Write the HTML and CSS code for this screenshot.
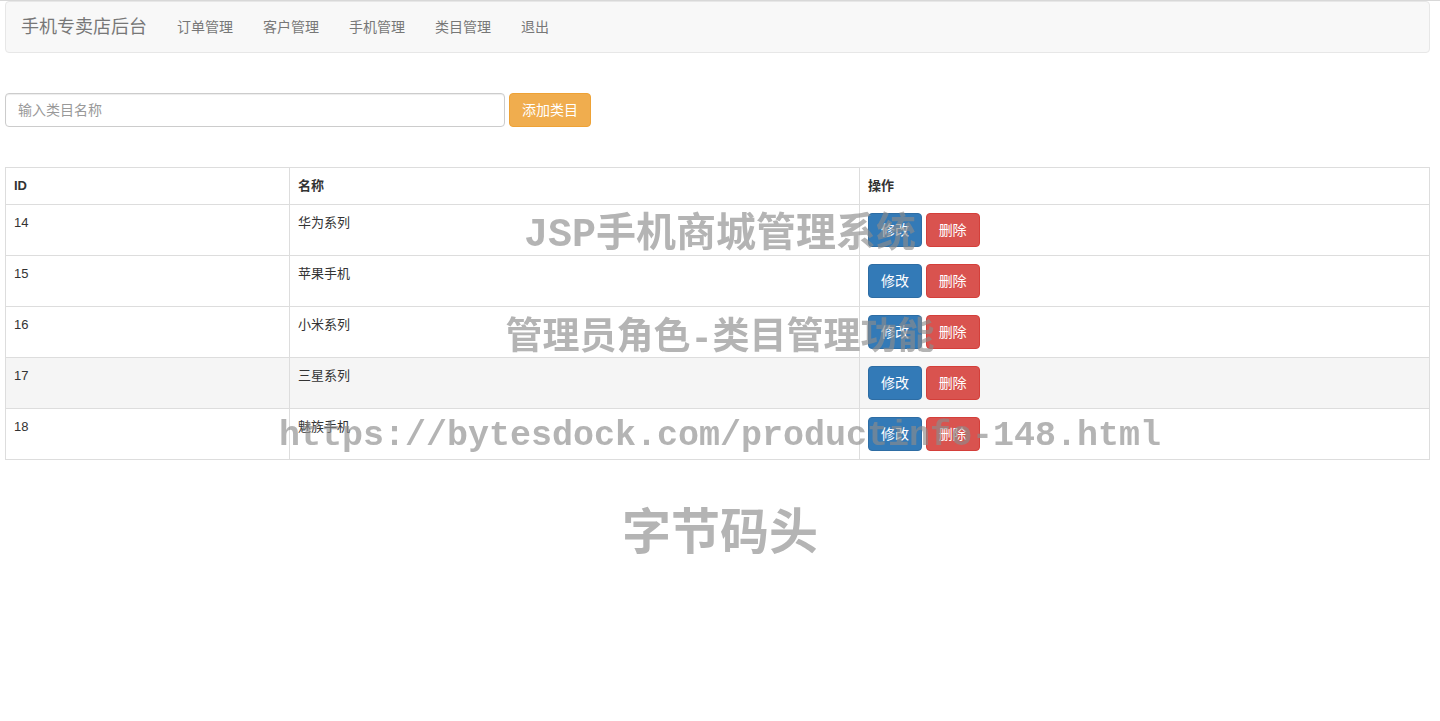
FILE: index.html
```html
<!DOCTYPE html>
<html lang="zh">
<head>
<meta charset="utf-8">
<title>类目管理</title>
<link rel="stylesheet" href="styles.css">
</head>
<body>
<div class="topline"></div>
<div class="page">
  <nav class="navbar">
    <a class="brand" href="#">手机专卖店后台</a>
    <ul class="nav">
      <li><a href="#">订单管理</a></li>
      <li><a href="#">客户管理</a></li>
      <li><a href="#">手机管理</a></li>
      <li><a href="#">类目管理</a></li>
      <li><a href="#">退出</a></li>
    </ul>
  </nav>

  <form class="add-form">
    <input class="form-control" type="text" placeholder="输入类目名称">
    <button type="button" class="btn btn-warning">添加类目</button>
  </form>

  <table class="table">
    <thead>
      <tr><th class="c-id">ID</th><th class="c-name">名称</th><th class="c-op">操作</th></tr>
    </thead>
    <tbody>
      <tr><td>14</td><td>华为系列</td><td><button class="btn btn-primary">修改</button> <button class="btn btn-danger">删除</button></td></tr>
      <tr><td>15</td><td>苹果手机</td><td><button class="btn btn-primary">修改</button> <button class="btn btn-danger">删除</button></td></tr>
      <tr><td>16</td><td>小米系列</td><td><button class="btn btn-primary">修改</button> <button class="btn btn-danger">删除</button></td></tr>
      <tr class="hover"><td>17</td><td>三星系列</td><td><button class="btn btn-primary">修改</button> <button class="btn btn-danger">删除</button></td></tr>
      <tr><td>18</td><td>魅族手机</td><td><button class="btn btn-primary">修改</button> <button class="btn btn-danger">删除</button></td></tr>
    </tbody>
  </table>
</div>

<div class="watermark">
  <div class="wm wm1">JSP手机商城管理系统</div>
  <div class="wm wm2">管理员角色-类目管理功能</div>
  <div class="wm wm3">https://bytesdock.com/productinfo-148.html</div>
  <div class="wm wm4">字节码头</div>
</div>
</body>
</html>
```

FILE: styles.css
```css
* { box-sizing: border-box; }
html, body { margin: 0; padding: 0; background: #fff; }
body {
  font-family: "Liberation Sans", "Noto Sans CJK SC", sans-serif;
  font-size: 14px;
  line-height: 20px;
  color: #333;
}
.topline { height: 1px; background: #d8d8d8; }
.page { padding: 0 10px 0 5px; }

.navbar {
  display: flex;
  align-items: center;
  height: 52px;
  margin-top: 0;
  background: #f8f8f8;
  border: 1px solid #e7e7e7;
  border-radius: 4px;
}
.brand {
  padding: 15px;
  font-size: 18px;
  line-height: 20px;
  color: #777;
  text-decoration: none;
}
.nav { display: flex; list-style: none; margin: 0; padding: 0; }
.nav a {
  display: block;
  padding: 15px;
  color: #777;
  text-decoration: none;
  font-size: 14px;
}

.add-form { display: flex; gap: 4px; margin-top: 40px; }
.form-control {
  width: 500px;
  height: 34px;
  padding: 6px 12px;
  font-family: inherit;
  font-size: 14px;
  color: #555;
  border: 1px solid #ccc;
  border-radius: 4px;
  box-shadow: inset 0 1px 1px rgba(0,0,0,.075);
  outline: none;
}
.form-control::placeholder { color: #999; }

.btn {
  display: inline-block;
  height: 34px;
  padding: 6px 12px;
  font-family: inherit;
  font-size: 14px;
  line-height: 20px;
  color: #fff;
  border: 1px solid transparent;
  border-radius: 4px;
  cursor: pointer;
  vertical-align: middle;
}
.btn-warning { background: #f0ad4e; border-color: #eea236; }
.btn-primary { background: #337ab7; border-color: #2e6da4; }
.btn-danger { background: #d9534f; border-color: #d43f3a; }

.table {
  width: 100%;
  margin-top: 40px;
  border-collapse: collapse;
  border: 1px solid #ddd;
  table-layout: fixed;
  font-size: 13px;
}
.table th, .table td {
  border: 1px solid #ddd;
  padding: 8px;
  text-align: left;
  vertical-align: top;
  line-height: 20px;
}
.table th { font-weight: bold; }
.c-id { width: 284px; }
.c-name { width: 570px; }
.table tr.hover td { background: #f5f5f5; }

.watermark {
  position: fixed;
  inset: 0;
  pointer-events: none;
}
.wm {
  position: absolute;
  left: 0;
  right: 0;
  text-align: center;
  font-weight: bold;
  color: rgba(140,140,140,0.65);
  white-space: nowrap;
  font-family: "Liberation Mono", "Noto Sans CJK SC", monospace;
}
.wm1 { top: 212px; font-size: 40px; line-height: 48px; }
.wm2 { top: 315px; font-size: 37px; line-height: 48px; }
.wm3 { top: 414px; font-size: 35px; line-height: 44px; }
.wm4 { top: 500px; font-size: 49px; line-height: 56px; font-family: "Noto Sans CJK SC", sans-serif; }
```
